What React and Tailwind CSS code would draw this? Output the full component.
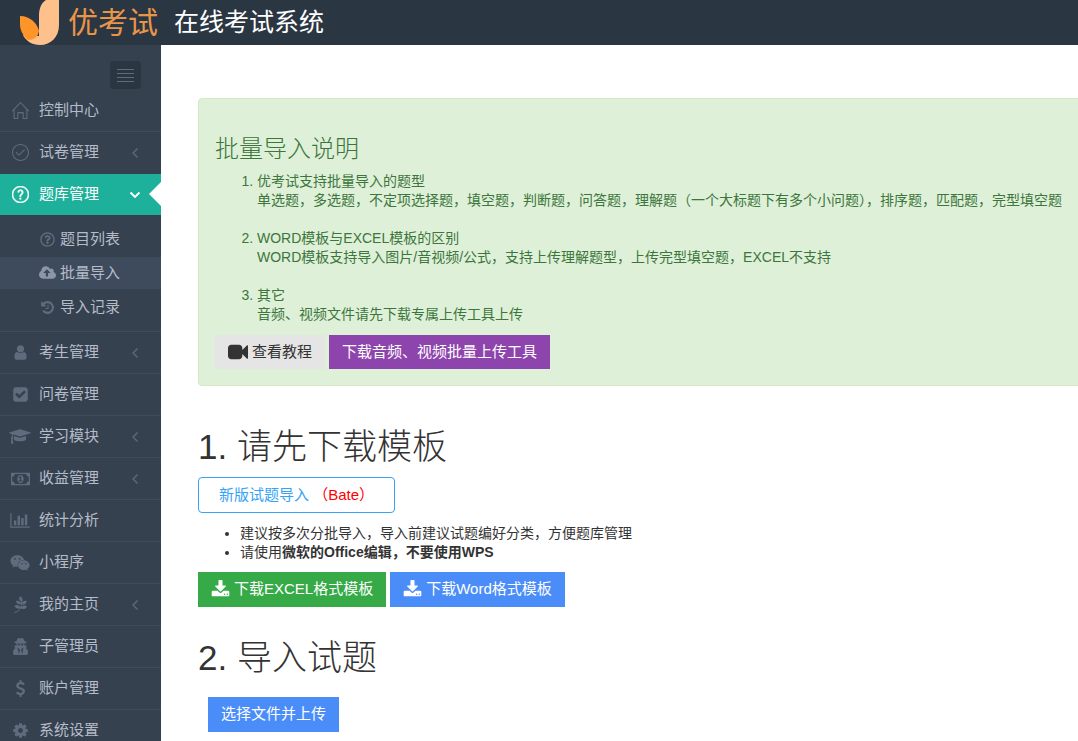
import { useState } from "react";
import { SlHome, SlCheck, SlQuestion } from "react-icons/sl";
import { FaRegQuestionCircle, FaWeixin, FaPagelines, FaUserSecret } from "react-icons/fa";

// solid icons, drawn on a 1792-unit grid
const PATHS = {
  upload: {
    w: 1920,
    d: "M1280 864q0-14-9-23l-352-352q-9-9-23-9t-23 9l-351 351q-10 12-10 24 0 14 9 23t23 9h224v352q0 13 9.5 22.5t22.5 9.5h192q13 0 22.5-9.5t9.5-22.5v-352h224q13 0 22.5-9.5t9.5-22.5zm640 288q0 159-112.5 271.5t-271.5 112.5h-1088q-185 0-316.5-131.5t-131.5-316.5q0-130 70-240t188-165q-2-30-2-43 0-212 150-362t362-150q156 0 285.5 87t188.5 231q71-62 166-62 106 0 181 75t75 181q0 76-41 138 130 31 213.5 135.5t83.5 238.5z",
  },
  history: {
    w: 1792,
    d: "M1664 896q0 156-61 298t-164 245-245 164-298 61q-172 0-327-72.5t-264-204.5q-7-10-6.5-22.5t8.5-20.5l137-138q10-9 25-9 16 2 23 12 73 95 179 147t225 52q104 0 198.5-40.5t163.5-109.5 109.5-163.5 40.5-198.5-40.5-198.5-109.5-163.5-163.5-109.5-198.5-40.5q-98 0-188 35.5t-160 101.5l137 138q31 30 14 69-17 40-59 40h-448q-26 0-45-19t-19-45v-448q0-42 40-59 39-17 69 14l130 129q107-101 244.5-156.5t284.5-55.5q156 0 298 61t245 164 164 245 61 298zm-640-288v448q0 14-9 23t-23 9h-320q-14 0-23-9t-9-23v-64q0-14 9-23t23-9h224v-352q0-14 9-23t23-9h64q14 0 23 9t9 23z",
  },
  user: {
    w: 1792,
    d: "M1536 1399q0 109-62.5 187t-150.5 78h-854q-88 0-150.5-78t-62.5-187q0-85 8.5-160.5t31.5-152 58.5-131 94-89 134.5-34.5q131 128 313 128t313-128q76 0 134.5 34.5t94 89 58.5 131 31.5 152 8.5 160.5zm-256-887q0 159-112.5 271.5t-271.5 112.5-271.5-112.5-112.5-271.5 112.5-271.5 271.5-112.5 271.5 112.5 112.5 271.5z",
  },
  checkSquare: {
    w: 1792,
    d: "M813 1299l614-614q19-19 19-45t-19-45l-102-102q-19-19-45-19t-45 19l-467 467-211-211q-19-19-45-19t-45 19l-102 102q-19 19-19 45t19 45l358 358q19 19 45 19t45-19zm851-883v960q0 119-84.5 203.5t-203.5 84.5h-960q-119 0-203.5-84.5t-84.5-203.5v-960q0-119 84.5-203.5t203.5-84.5h960q119 0 203.5 84.5t84.5 203.5z",
  },
  cap: {
    w: 2304,
    d: "M1774 836l18 316q4 69-82 128t-235 93.5-323 34.5-323-34.5-235-93.5-82-128l18-316 574 181q22 7 48 7t48-7zm530-324q0 23-22 31l-1120 352q-4 1-10 1t-10-1l-652-206q-43 34-71 111.5t-34 178.5q63 36 63 109 0 69-58 107l58 433q2 14-8 25-9 11-24 11h-192q-15 0-24-11-10-11-8-25l58-433q-58-38-58-107 0-73 65-111 11-207 98-330l-333-104q-22-8-22-31t22-31l1120-352q4-1 10-1t10 1l1120 352q22 8 22 31z",
  },
  money: {
    w: 1920,
    d: "M768 1152h384v-96h-128v-448h-114l-148 137 77 80q42-37 55-57h2v288h-128v96zm512-256q0 70-21 142t-59.5 134-101.5 101-138 39-138-39-101.5-101-59.5-134-21-142 21-142 59.5-134 101.5-101 138-39 138 39 101.5 101 59.5 134 21 142zm512 256v-512q-106 0-181-75t-75-181h-1152q0 106-75 181t-181 75v512q106 0 181 75t75 181h1152q0-106 75-181t181-75zm128-832v1152q0 26-19 45t-45 19h-1792q-26 0-45-19t-19-45v-1152q0-26 19-45t45-19h1792q26 0 45 19t19 45z",
  },
  chart: {
    w: 2048,
    d: "M640 896v512h-256v-512h256zm384-512v1024h-256v-1024h256zm1024 1152v128h-2048v-1536h128v1408h1920zm-640-896v768h-256v-768h256zm384-384v1152h-256v-1152h256z",
  },
  dollar: {
    w: 1792,
    d: "M1362 1185q0 153-99.5 263.5t-258.5 136.5v175q0 14-9 23t-23 9h-135q-13 0-22.5-9.5t-9.5-22.5v-175q-66-9-127.5-31t-101.5-44.5-74-48-46.5-37.5-17.5-18q-17-21-2-41l103-135q7-10 23-12 15-2 24 9l2 2q113 99 243 125 37 8 74 8 81 0 142.5-43t61.5-122q0-28-15-53t-33.5-42-58.5-37.5-66-32-80-32.5q-39-16-61.5-25t-61.5-26.5-62.5-31-56.5-35.5-53.5-42.5-43.5-49-35.5-58-21-66.5-8.5-78q0-138 98-242t255-134v-180q0-13 9.5-22.5t22.5-9.5h135q14 0 23 9t9 23v176q57 6 110.5 23t87 33.5 63.5 37.5 39 29 15 14q17 18 5 38l-81 146q-8 15-23 16-14 3-27-7-3-3-14.5-12t-39-26.5-58.5-32-74.5-26-85.5-11.5q-95 0-155 43t-60 111q0 26 8.5 48t29.5 41.5 39.5 33 56 31 60.5 27 70 27.5q53 20 81 31.5t76 35 75.5 42.5 62 50 53 63.5 31.5 76.5 13 94z",
  },
  cog: {
    w: 1792,
    d: "M1152 896q0-106-75-181t-181-75-181 75-75 181 75 181 181 75 181-75 75-181zm512-109v222q0 12-8 23t-20 13l-185 28q-19 54-39 91 35 50 107 138 10 12 10 25t-9 23q-27 37-99 108t-94 71q-12 0-26-9l-138-108q-44 23-91 38-16 136-29 186-7 28-36 28h-222q-14 0-24.5-8.5t-11.5-21.5l-28-184q-49-16-90-37l-141 107q-10 9-25 9-14 0-25-11-126-114-165-168-7-10-7-23 0-12 8-23 15-21 51-66.5t54-70.5q-27-50-41-99l-183-27q-13-2-21-12.5t-8-23.5v-222q0-12 8-23t19-13l186-28q14-46 39-92-40-57-107-138-10-12-10-24 0-10 9-23 26-36 98.5-107.5t94.5-71.5q13 0 26 10l138 107q44-23 91-38 16-136 29-186 7-28 36-28h222q14 0 24.5 8.5t11.5 21.5l28 184q49 16 90 37l142-107q9-9 24-9 13 0 25 10 129 119 165 170 7 8 7 22 0 12-8 23-15 21-51 66.5t-54 70.5q26 50 41 98l183 28q13 2 21 12.5t8 23.5z",
  },
  download: {
    w: 1792,
    d: "M1344 1344q0-26-19-45t-45-19-45 19-19 45 19 45 45 19 45-19 19-45zm256 0q0-26-19-45t-45-19-45 19-19 45 19 45 45 19 45-19 19-45zm128-224v320q0 40-28 68t-68 28h-1472q-40 0-68-28t-28-68v-320q0-40 28-68t68-28h465l135 136q58 56 136 56t136-56l136-136h464q40 0 68 28t28 68zm-325-569q17 41-14 70l-448 448q-18 19-45 19t-45-19l-448-448q-31-29-14-70 17-39 59-39h256v-448q0-26 19-45t45-19h256q26 0 45 19t19 45v448h256q42 0 59 39z",
  },
  video: {
    w: 1792,
    d: "M1792 352v1088q0 42-39 59-13 5-25 5-27 0-45-19l-403-403v166q0 119-84.5 203.5t-203.5 84.5h-704q-119 0-203.5-84.5t-84.5-203.5v-704q0-119 84.5-203.5t203.5-84.5h704q119 0 203.5 84.5t84.5 203.5v165l403-402q18-19 45-19 12 0 25 5 39 17 39 59z",
  },
};

const Icon = ({ name, className }) => (
  <svg viewBox={`0 0 ${PATHS[name].w} 1792`} className={className} fill="currentColor" aria-hidden="true">
    <path d={PATHS[name].d} />
  </svg>
);

const NAV = [
  { label: "控制中心", icon: <SlHome className="size-[17px]" /> },
  { label: "试卷管理", icon: <SlCheck className="size-[17px]" />, more: true },
  {
    label: "题库管理",
    icon: <SlQuestion className="size-[17px]" stroke="currentColor" strokeWidth="36" />,
    children: [
      { label: "题目列表", icon: <FaRegQuestionCircle className="size-[15px]" /> },
      { label: "批量导入", icon: <Icon name="upload" className="h-4 w-[17px]" />, current: true },
      { label: "导入记录", icon: <Icon name="history" className="size-[15px]" /> },
    ],
  },
  { label: "考生管理", icon: <Icon name="user" className="size-[17px]" />, more: true },
  { label: "问卷管理", icon: <Icon name="checkSquare" className="size-[17px]" /> },
  { label: "学习模块", icon: <Icon name="cap" className="h-[17px] w-[22px]" />, more: true },
  { label: "收益管理", icon: <Icon name="money" className="h-[18px] w-[19px]" />, more: true },
  { label: "统计分析", icon: <Icon name="chart" className="h-[17px] w-5" /> },
  { label: "小程序", icon: <FaWeixin className="size-5" /> },
  { label: "我的主页", icon: <FaPagelines className="size-[17px]" />, more: true },
  { label: "子管理员", icon: <FaUserSecret className="size-[17px]" /> },
  { label: "账户管理", icon: <Icon name="dollar" className="size-[17px]" /> },
  { label: "系统设置", icon: <Icon name="cog" className="size-[17px]" /> },
];

function Logo() {
  return (
    <svg viewBox="0 0 40 45" className="h-[45px] w-10" aria-hidden="true">
      <path d="M39 0V25C39 37 31 45 20 45C12 45 6 41 3 35L19 36V16C19 9 21 3 26 0Z" fill="#ffc18b" />
      <path d="M0 16C10 16 17 23 19 31C18 37 14 40 8 40C3 36 0 30 0 24Z" fill="#ff9429" />
    </svg>
  );
}

function Chevron({ open }) {
  return (
    <svg
      viewBox="0 0 12 12"
      className={`ml-auto mr-5 size-3 ${open ? "text-white" : "text-[#606c7d]"}`}
      fill="none"
      stroke="currentColor"
      strokeWidth={open ? 1.8 : 1.2}
      aria-hidden="true"
    >
      <path d={open ? "M1.5 3.5L6 8L10.5 3.5" : "M8.5 1.5L4 6L8.5 10.5"} />
    </svg>
  );
}

function NavItem({ item }) {
  const active = Boolean(item.children);
  return (
    <li className={`border-t ${active ? "border-[#364150]" : "border-[#3f4b5b] first:border-transparent"}`}>
      <a
        href="#"
        className={`relative flex h-[41px] items-center ${active ? "bg-[#1db19b] text-white" : "text-[#b4bcc8]"}`}
      >
        <span className={`ml-2 mr-[7px] flex w-6 shrink-0 justify-center ${active ? "text-white" : "text-[#606c7d]"}`}>
          {item.icon}
        </span>
        {item.label}
        {(item.more || active) && <Chevron open={active} />}
        {active && (
          <span className="absolute right-0 top-2 border-y-[12px] border-r-[12px] border-y-transparent border-r-white" />
        )}
      </a>
      {active && (
        <ul className="flex flex-col gap-0.5 py-2">
          {item.children.map((c) => (
            <li key={c.label}>
              <a
                href="#"
                className={`flex h-8 items-center gap-1 pl-[39px] text-[#b4bcc8] ${c.current ? "bg-[#3e4b5c]" : ""}`}
              >
                <span className={`flex w-[17px] justify-center ${c.current ? "text-[#8b96a7]" : "text-[#606c7d]"}`}>
                  {c.icon}
                </span>
                {c.label}
              </a>
            </li>
          ))}
        </ul>
      )}
    </li>
  );
}

function Sidebar() {
  const [collapsed, setCollapsed] = useState(false);
  return (
    <nav className="w-[161px] shrink-0 bg-[#364150] pt-4 text-[15px]">
      <button
        type="button"
        aria-label="菜单"
        onClick={() => setCollapsed(!collapsed)}
        className="ml-auto mr-5 flex h-7 w-[31px] flex-col items-center justify-center gap-[3px] rounded bg-[#2b3643]"
      >
        {[0, 1, 2, 3].map((i) => (
          <span key={i} className="h-px w-[17px] bg-[#606c7d]" />
        ))}
      </button>
      {!collapsed && (
        <ul>
          {NAV.map((item) => (
            <NavItem key={item.label} item={item} />
          ))}
        </ul>
      )}
    </nav>
  );
}

function Guide() {
  return (
    <section className="-mr-5 rounded border border-[#d6e9c6] bg-[#dff0d8] p-4 text-[#3c763d]">
      <h2 className="mb-2 mt-[19px] text-2xl/[30px] font-light">批量导入说明</h2>
      <ol className="mb-[11px] list-decimal whitespace-nowrap pl-[42px] text-sm/[19px]">
        <li className="mb-[19px]">
          优考试支持批量导入的题型
          <br />
          单选题，多选题，不定项选择题，填空题，判断题，问答题，理解题（一个大标题下有多个小问题），排序题，匹配题，完型填空题
        </li>
        <li className="mb-[19px]">
          WORD模板与EXCEL模板的区别
          <br />
          WORD模板支持导入图片/音视频/公式，支持上传理解题型，上传完型填空题，EXCEL不支持
        </li>
        <li>
          其它
          <br />
          音频、视频文件请先下载专属上传工具上传
        </li>
      </ol>
      <div className="flex gap-1 text-[15px]">
        <button type="button" className="flex h-[34px] items-center gap-1 bg-[#e5e5e5] px-[13px] text-[#333]">
          <Icon name="video" className="size-5" />
          查看教程
        </button>
        <button type="button" className="h-[34px] bg-[#8e44ad] px-[13px] text-white">
          下载音频、视频批量上传工具
        </button>
      </div>
    </section>
  );
}

export default function App() {
  return (
    <div className="flex h-screen flex-col overflow-hidden bg-white font-['Liberation_Sans','Noto_Sans_CJK_SC',sans-serif] text-[#333]">
      <header className="flex h-[45px] shrink-0 items-center bg-[#2b3643] pl-5">
        <Logo />
        <span className="ml-2 text-[30px] text-[#e8954a]">优考试</span>
        <h1 className="ml-4 text-[25px] text-white">在线考试系统</h1>
      </header>
      <div className="flex min-h-0 flex-1">
        <Sidebar />
        <main className="min-w-0 flex-1 overflow-hidden pl-[37px] pt-[53px]">
          <Guide />
          <section className="pt-10">
            <h2 className="mb-2.5 text-[35px]/[41px] font-light">1. 请先下载模板</h2>
            <button type="button" className="h-9 rounded border border-[#36a3f7] px-5 text-[15px] text-[#36a3f7]">
              新版试题导入 <span className="text-[#f00]">（Bate）</span>
            </button>
            <ul className="mb-2.5 mt-[11px] list-disc pl-[42px] text-sm/[19px]">
              <li>建议按多次分批导入，导入前建议试题编好分类，方便题库管理</li>
              <li>
                请使用<b>微软的Office编辑，不要使用WPS</b>
              </li>
            </ul>
            <div className="flex gap-1 text-[15px] text-white">
              <button type="button" className="flex h-[35px] items-center gap-1 bg-[#35aa47] px-[13px]">
                <Icon name="download" className="size-[19px]" />
                下载EXCEL格式模板
              </button>
              <button type="button" className="flex h-[35px] items-center gap-1 bg-[#4b8df8] px-[13px]">
                <Icon name="download" className="size-[19px]" />
                下载Word格式模板
              </button>
            </div>
          </section>
          <section className="pt-[30px]">
            <h2 className="mb-[19px] text-[35px]/[41px] font-light">2. 导入试题</h2>
            <button type="button" className="ml-2.5 h-[35px] bg-[#4b8df8] px-[13px] text-[15px] text-white">
              选择文件并上传
            </button>
          </section>
        </main>
      </div>
    </div>
  );
}
